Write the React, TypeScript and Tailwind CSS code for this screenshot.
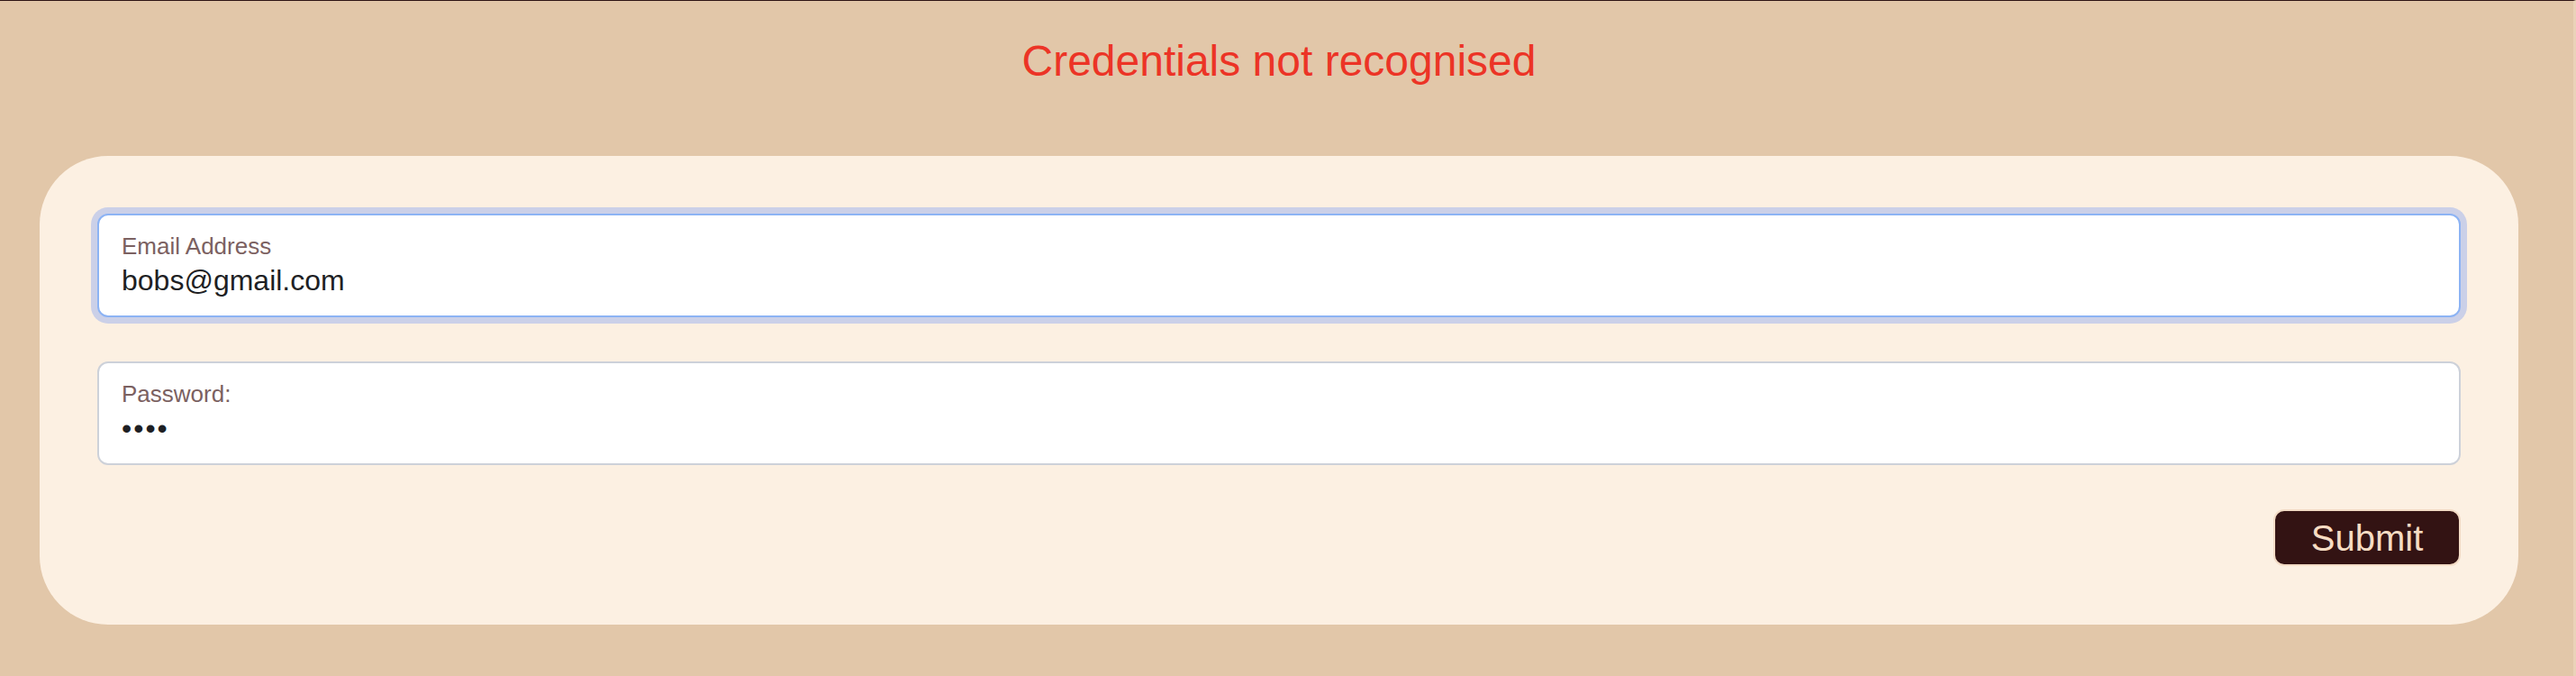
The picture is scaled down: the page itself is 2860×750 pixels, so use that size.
import React from "react";

export default function App() {
  return (
    <div
      className="min-h-[750px] w-full bg-[#e2c7a9] border-t border-[#2e1414] border-r-[3px] border-r-[#ead2b8] flex flex-col"
      style={{ fontFamily: '"Liberation Sans", Arial, Helvetica, sans-serif' }}
    >
      <div className="ml-[44px] w-[2752px] flex flex-col">
        <h1 className="mt-[43px] text-center text-[48px] leading-[48px] text-[#ec3426] font-normal">
          Credentials not recognised
        </h1>
        <form
          className="mt-[81px] bg-[#fcf0e2] rounded-[76px] pt-16 px-16 pb-[65px] flex flex-col gap-[49px]"
          onSubmit={(e) => e.preventDefault()}
        >
          <label className="block rounded-[12px] bg-white border-2 border-[#8cb3f4] shadow-[0_0_0_7px_#cbd0e8] pl-[25px] pr-6 pt-[19px] pb-[20px]">
            <div className="text-[26px] leading-[30px] text-[#7b6161]">Email Address</div>
            <input
              type="email"
              defaultValue="bobs@gmail.com"
              className="mt-[5px] block w-full bg-transparent outline-none border-0 p-0 text-[32px] leading-[37px] h-[37px] text-[#1e1f24]"
              style={{ fontFamily: '"Liberation Sans", Arial, sans-serif' }}
            />
          </label>
          <label className="block rounded-[12px] bg-white border-2 border-[#cdd1d9] pl-[25px] pr-6 pt-[19px] pb-[20px]">
            <div className="text-[26px] leading-[30px] text-[#7b6161]">Password:</div>
            <input
              type="password"
              defaultValue="test"
              className="mt-[5px] block w-full bg-transparent outline-none border-0 p-0 text-[32px] leading-[37px] h-[37px] text-[#1e1f24] tracking-[2px]"
              style={{ fontFamily: '"Liberation Sans", Arial, sans-serif' }}
            />
          </label>
          <div className="flex justify-end">
            <button
              type="submit"
              className="w-[208px] h-[63px] rounded-[12px] bg-[#331313] border-2 border-[#f3dcc6] text-[#f6dcc3] text-[40px] leading-[40px] flex items-center justify-center"
            >
              Submit
            </button>
          </div>
        </form>
      </div>
    </div>
  );
}
